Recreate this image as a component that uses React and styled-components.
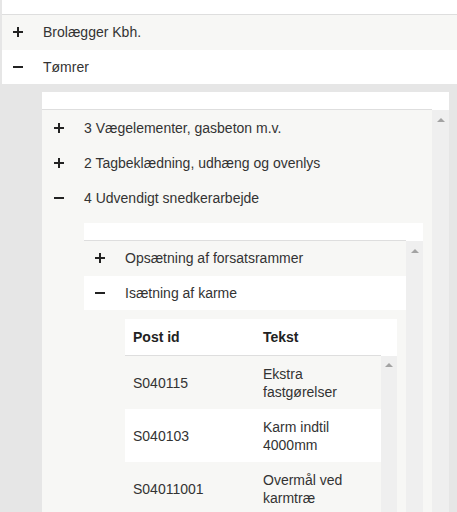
import React from 'react';
import styled, { createGlobalStyle } from 'styled-components';

const GlobalStyle = createGlobalStyle`
  html, body {
    margin: 0;
    padding: 0;
    background: #fff;
  }
  body {
    font-family: "Liberation Sans", Arial, sans-serif;
    font-size: 14px;
    color: #333;
  }
`;

const Page = styled.div`
  height: 512px;
  overflow: hidden;
  display: flex;
  flex-direction: column;
  border-left: 2px solid #e6e6e6;
  background: #fff;
`;

const TopHeader = styled.div`
  flex: none;
  height: 14px;
  border-bottom: 1px solid #dedede;
  background: #fff;
`;

const Row = styled.div`
  flex: none;
  display: flex;
  align-items: center;
  height: ${p => p.$h}px;
  background: ${p => (p.$alt ? '#fff' : '#f7f7f5')};
`;

const ToggleCell = styled.div`
  flex: 0 0 ${p => p.$w}px;
  box-sizing: border-box;
  padding-left: ${p => p.$pad}px;
  display: flex;
  align-items: center;
`;

const Label = styled.span`
  white-space: nowrap;
  color: #333;
`;

const Detail = styled.div`
  flex: 1;
  min-height: 0;
  display: flex;
  box-sizing: border-box;
  padding: ${p => p.$pad};
  background: ${p => p.$bg};
`;

const Grid = styled.div`
  flex: 1;
  min-height: 0;
  min-width: 0;
  display: flex;
  flex-direction: column;
  background: #fff;
`;

const GridHead = styled.div`
  flex: none;
  display: flex;
  height: ${p => p.$h + 1}px;
  background: #fff;
`;

const HeadCells = styled.div`
  flex: 1;
  display: flex;
  align-items: center;
  box-sizing: border-box;
  border-bottom: 1px solid #dedede;
`;

const HeadSpacer = styled.div`
  flex: 0 0 ${p => p.$w}px;
`;

const GridBody = styled.div`
  flex: 1;
  min-height: 0;
  display: flex;
`;

const RowsCol = styled.div`
  flex: 1;
  min-width: 0;
  min-height: 0;
  display: flex;
  flex-direction: column;
  overflow: hidden;
  background: #f7f7f5;
`;

const Scrollbar = styled.div`
  flex: 0 0 ${p => p.$w}px;
  background: #efefef;
  display: flex;
  justify-content: center;
`;

const ArrowUp = styled.div`
  margin-top: ${p => p.$top}px;
  width: 0;
  height: 0;
  border-left: 4px solid transparent;
  border-right: 4px solid transparent;
  border-bottom: 4px solid #a3a3a3;
`;

const HeadCell = styled.div`
  flex: ${p => (p.$w ? `0 0 ${p.$w}px` : '1')};
  box-sizing: border-box;
  padding-left: 8px;
  font-weight: bold;
  color: #222;
`;

const DataRow = styled.div`
  flex: none;
  display: flex;
  align-items: center;
  height: 53px;
  background: ${p => (p.$alt ? '#fff' : '#f7f7f5')};
`;

const DataCell = styled.div`
  flex: ${p => (p.$w ? `0 0 ${p.$w}px` : '1')};
  box-sizing: border-box;
  padding: 0 8px;
  line-height: 18px;
  color: #333;
`;

function Toggle({ open }) {
  return (
    <svg width="10" height="10" viewBox="0 0 10 10">
      <path d="M0 5H10" stroke="#222" strokeWidth="2" />
      {!open && <path d="M5 0V10" stroke="#222" strokeWidth="2" />}
    </svg>
  );
}

function TreeRow({ label, open, alt, h = 34.5, w = 41, pad = 11 }) {
  return (
    <Row $alt={alt} $h={h}>
      <ToggleCell $w={w} $pad={pad}>
        <Toggle open={open} />
      </ToggleCell>
      <Label>{label}</Label>
    </Row>
  );
}

function NestedGrid({ head = 17, bar = 17, arrowTop = 8, columns, children }) {
  return (
    <Grid>
      <GridHead $h={head}>
        <HeadCells>{columns}</HeadCells>
        <HeadSpacer $w={bar} />
      </GridHead>
      <GridBody>
        <RowsCol>{children}</RowsCol>
        <Scrollbar $w={bar}>
          <ArrowUp $top={arrowTop} />
        </Scrollbar>
      </GridBody>
    </Grid>
  );
}

const posts = [
  { id: 'S040115', text: 'Ekstra fastgørelser' },
  { id: 'S040103', text: 'Karm indtil 4000mm' },
  { id: 'S04011001', text: 'Overmål ved karmtræ' },
];

export default function App() {
  return (
    <>
      <GlobalStyle />
      <Page>
        <TopHeader />
        <TreeRow label="Brolægger Kbh." />
        <TreeRow label="Tømrer" open alt />
        <Detail $pad="8px 8px 0 40px" $bg="#e6e6e6">
          <NestedGrid>
            <TreeRow h={35} w={42} pad={12} label="3 Vægelementer, gasbeton m.v." />
            <TreeRow h={35} w={42} pad={12} label="2 Tagbeklædning, udhæng og ovenlys" />
            <TreeRow h={35} w={42} pad={12} label="4 Udvendigt snedkerarbejde" open />
            <Detail $pad="8px 9px 0 42px" $bg="#f7f7f5">
              <NestedGrid>
                <TreeRow label="Opsætning af forsatsrammer" />
                <TreeRow label="Isætning af karme" open alt />
                <Detail $pad="9px 9px 0 41px" $bg="#f7f7f5">
                  <NestedGrid
                    head={36}
                    bar={16}
                    arrowTop={7}
                    columns={
                      <>
                        <HeadCell $w={130}>Post id</HeadCell>
                        <HeadCell>Tekst</HeadCell>
                      </>
                    }
                  >
                    {posts.map((p, i) => (
                      <DataRow key={p.id} $alt={i % 2 === 1}>
                        <DataCell $w={130}>{p.id}</DataCell>
                        <DataCell>{p.text}</DataCell>
                      </DataRow>
                    ))}
                  </NestedGrid>
                </Detail>
              </NestedGrid>
            </Detail>
          </NestedGrid>
        </Detail>
      </Page>
    </>
  );
}
